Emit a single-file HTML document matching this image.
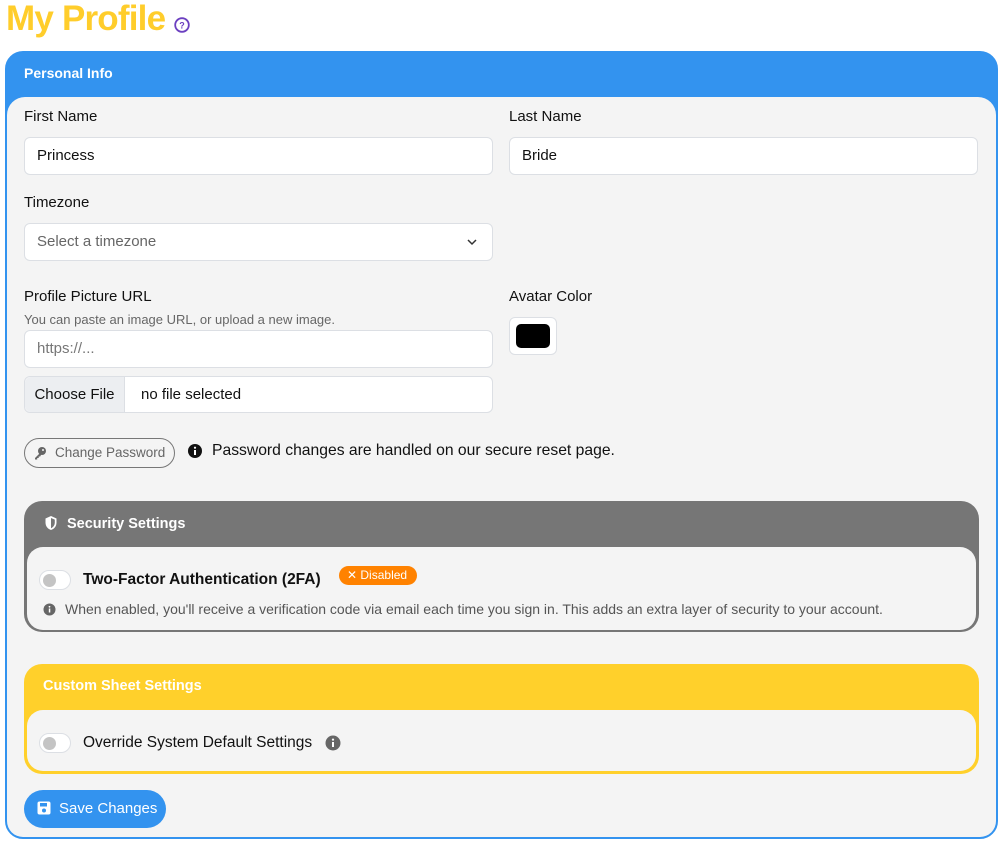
<!DOCTYPE html>
<html><head><meta charset="utf-8"><style>
*{box-sizing:border-box;margin:0;padding:0}
body{width:1004px;height:843px;background:#fff;font-family:"Liberation Sans",sans-serif;position:relative;overflow:hidden;color:#111}
.a{position:absolute}
h1{position:absolute;left:6px;top:-1px;font-size:35px;font-weight:bold;color:#ffcd2b;letter-spacing:-0.8px}
.card{left:5px;top:51px;width:993px;height:788px;background:#3393ef;border-radius:18px;border:2px solid #3393ef}
.body{left:7px;top:97px;width:989px;height:740px;background:#f4f4f4;border-radius:18px 18px 16px 16px}
.lbl{font-size:15px;color:#111}
.inp{background:#fff;border:1px solid #dcdfe4;border-radius:6px;height:38px;font-size:15px;padding:0 12px;line-height:36px}
.sm{font-size:12.5px;color:#666}
</style></head><body>
<h1>My Profile</h1>
<svg class="a" style="left:174px;top:17px" width="16" height="16" viewBox="0 0 16 16"><circle cx="8" cy="8" r="6.8" fill="none" stroke="#6b3fc0" stroke-width="1.8"/><text x="8" y="11.5" font-size="9" font-weight="bold" text-anchor="middle" fill="#6b3fc0" font-family="Liberation Sans">?</text></svg>
<div class="a card"></div>
<div class="a" style="left:24px;top:65px;color:#fff;font-weight:bold;font-size:14px">Personal Info</div>
<div class="a body"></div>

<div class="a lbl" style="left:24px;top:108px">First Name</div>
<div class="a inp" style="left:24px;top:137px;width:469px">Princess</div>
<div class="a lbl" style="left:509px;top:108px">Last Name</div>
<div class="a inp" style="left:509px;top:137px;width:469px">Bride</div>
<div class="a lbl" style="left:24px;top:194px">Timezone</div>
<div class="a inp" style="left:24px;top:223px;width:469px;color:#666">Select a timezone</div>
<svg class="a" style="left:466px;top:237px" width="12" height="10"><path d="M2 3l4 4 4-4" fill="none" stroke="#333" stroke-width="1.5"/></svg>
<div class="a lbl" style="left:24px;top:288px">Profile Picture URL</div>
<div class="a sm" style="left:24px;top:312px;font-size:13px">You can paste an image URL, or upload a new image.</div>
<div class="a inp" style="left:24px;top:330px;width:469px;color:#777">https://...</div>
<div class="a inp" style="left:24px;top:376px;width:469px;height:37px;padding:0"><span style="display:inline-block;width:100px;height:35px;background:#eceef1;border-right:1px solid #dcdfe4;text-align:center;border-radius:6px 0 0 6px">Choose File</span><span style="padding-left:16px">no file selected</span></div>
<div class="a lbl" style="left:509px;top:288px">Avatar Color</div>
<div class="a" style="left:509px;top:317px;width:48px;height:38px;background:#fff;border:1px solid #dcdfe4;border-radius:6px"><div style="margin:6px 6px;width:34px;height:24px;background:#000;border-radius:5px"></div></div>

<div class="a" style="left:24px;top:438px;width:151px;height:30px;border:1px solid #777;border-radius:15px;font-size:13.5px;color:#666;line-height:28px;padding-left:30px">Change Password</div>
<svg class="a" style="left:33px;top:446px" width="14" height="14" viewBox="0 0 14 14"><circle cx="9" cy="5" r="4" fill="#666"/><path d="M7.5 6.5L2 12v1.5h2.2V12h1.5v-1.5h1.5l1-2" fill="#666"/><circle cx="10" cy="4" r="1" fill="#f4f4f4"/></svg>
<svg class="a" style="left:187px;top:443px" width="16" height="16"><circle cx="8" cy="8" r="7" fill="#111"/><rect x="7" y="7" width="2" height="5" fill="#fff"/><circle cx="8" cy="4.7" r="1.1" fill="#fff"/></svg>
<div class="a" style="left:212px;top:442px;font-size:15.7px">Password changes are handled on our secure reset page.</div>

<div class="a" style="left:24px;top:501px;width:955px;height:131px;background:#767676;border-radius:18px"></div>
<svg class="a" style="left:44px;top:515px" width="14" height="16" viewBox="0 0 14 16"><path d="M7 1L1.5 3.5v4c0 4 2.5 6.5 5.5 7.5 3-1 5.5-3.5 5.5-7.5v-4z" fill="#fff"/><path d="M7 3v10.3c2-1 3.8-3 3.8-5.8V4.6z" fill="#767676"/></svg>
<div class="a" style="left:67px;top:516px;color:#fff;font-weight:bold;font-size:14.5px">Security Settings</div>
<div class="a" style="left:27px;top:547px;width:949px;height:83px;background:#f4f4f4;border-radius:16px"></div>
<div class="a" style="left:39px;top:570px;width:32px;height:20px;border:1px solid #dcdfe4;border-radius:10px;background:#fff"><div style="margin:3px;width:13px;height:13px;border-radius:50%;background:#c4c4c4"></div></div>
<div class="a" style="left:83px;top:571px;font-weight:bold;font-size:15.5px">Two-Factor Authentication (2FA)</div>
<div class="a" style="left:339px;top:566px;width:78px;height:19px;background:#ff8200;border-radius:10px;color:#fff;font-size:12px;line-height:19px;padding-left:8px">✕ Disabled</div>
<svg class="a" style="left:43px;top:603px" width="13" height="13"><circle cx="6.5" cy="6.5" r="6" fill="#666"/><rect x="5.8" y="5.5" width="1.5" height="4" fill="#fff"/><circle cx="6.5" cy="3.8" r=".9" fill="#fff"/></svg>
<div class="a sm" style="left:65px;top:601px;font-size:14px;color:#555">When enabled, you'll receive a verification code via email each time you sign in. This adds an extra layer of security to your account.</div>

<div class="a" style="left:24px;top:664px;width:955px;height:110px;background:#ffd02b;border-radius:18px"></div>
<div class="a" style="left:43px;top:678px;color:#fff;font-weight:bold;font-size:14.5px">Custom Sheet Settings</div>
<div class="a" style="left:27px;top:710px;width:949px;height:61px;background:#f4f4f4;border-radius:16px"></div>
<div class="a" style="left:39px;top:733px;width:32px;height:20px;border:1px solid #dcdfe4;border-radius:10px;background:#fff"><div style="margin:3px;width:13px;height:13px;border-radius:50%;background:#c4c4c4"></div></div>
<div class="a" style="left:83px;top:734px;font-size:15.5px">Override System Default Settings</div>
<svg class="a" style="left:325px;top:735px" width="16" height="16"><circle cx="8" cy="8" r="7.5" fill="#666"/><rect x="7" y="7" width="2" height="5" fill="#fff"/><circle cx="8" cy="4.6" r="1.1" fill="#fff"/></svg>

<div class="a" style="left:24px;top:790px;width:142px;height:38px;background:#3393ef;border-radius:19px;color:#fff;font-size:15px;line-height:38px;padding-left:35px">Save Changes</div>
<svg class="a" style="left:37px;top:801px" width="14" height="14" viewBox="0 0 14 14"><rect x="0.5" y="0.5" width="13" height="13" rx="2" fill="#fff"/><rect x="3" y="2" width="7" height="3.5" fill="#3393ef"/><circle cx="7" cy="9.5" r="2" fill="#3393ef"/></svg>
</body></html>
